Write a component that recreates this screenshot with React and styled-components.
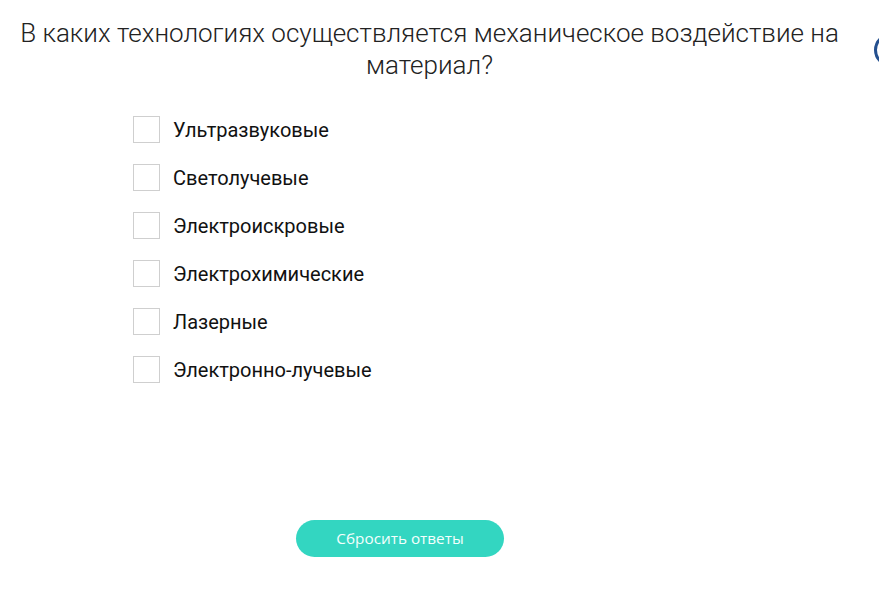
import React from 'react';
import styled, { createGlobalStyle } from 'styled-components';

const Global = createGlobalStyle`
  body {
    margin: 0;
    background: #ffffff;
    overflow: hidden;
  }
`;

const Page = styled.div`
  position: relative;
  width: 879px;
  height: 603px;
  overflow: hidden;
  font-family: Roboto, "Liberation Sans", sans-serif;
`;

const Title = styled.h1`
  margin: 0;
  padding: 17px 20px 0 0;
  font-size: 26px;
  font-weight: 300;
  line-height: 32px;
  color: #222;
  text-align: center;
`;

const Options = styled.div`
  display: flex;
  flex-direction: column;
  gap: 21px;
  margin: 35px 0 0 133px;
`;

const Option = styled.label`
  display: flex;
  align-items: center;
  gap: 13px;
  height: 27px;
  font-size: 20px;
  color: #111;
  cursor: pointer;
`;

const Box = styled.span`
  width: 25px;
  height: 25px;
  border: 1px solid #cfcfcf;
  background: #fff;
`;

const Footer = styled.div`
  display: flex;
  justify-content: center;
  padding: 137px 0 0 0;
  width: 800px;
`;

const ResetButton = styled.button`
  width: 208px;
  height: 37px;
  padding: 0 0 2px;
  border: none;
  border-radius: 19px;
  background: #33d6c1;
  color: #f4fffd;
  font-family: "Open Sans", "Liberation Sans", sans-serif;
  font-size: 15.3px;
  cursor: pointer;
`;

const EdgeCircle = styled.div`
  position: absolute;
  left: 874px;
  top: 33px;
  width: 34px;
  height: 34px;
  border-radius: 50%;
  border: 3px solid #24508f;
  box-sizing: border-box;
`;

const answers = [
  'Ультразвуковые',
  'Светолучевые',
  'Электроискровые',
  'Электрохимические',
  'Лазерные',
  'Электронно-лучевые',
];

export default function App() {
  return (
    <Page>
      <Global />
      <Title>В каких технологиях осуществляется механическое воздействие на материал?</Title>
      <Options>
        {answers.map(a => (
          <Option key={a}>
            <Box />
            {a}
          </Option>
        ))}
      </Options>
      <Footer>
        <ResetButton>Сбросить ответы</ResetButton>
      </Footer>
      <EdgeCircle />
    </Page>
  );
}
